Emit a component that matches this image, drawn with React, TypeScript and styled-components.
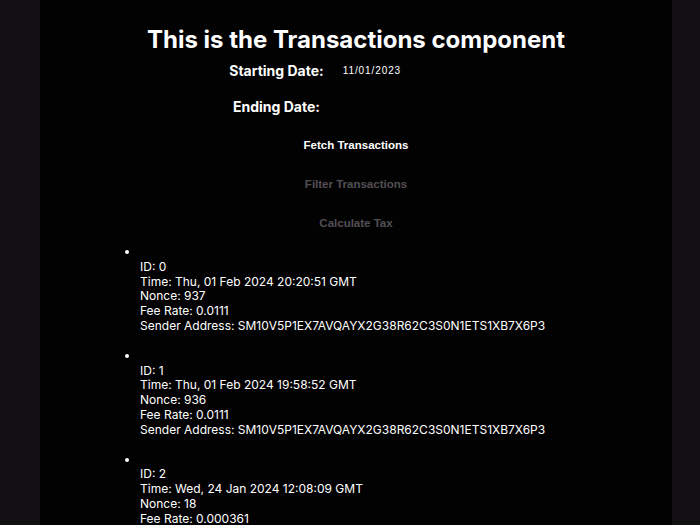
import React from "react";
import styled, { createGlobalStyle } from "styled-components";

const GlobalStyle = createGlobalStyle`
  html, body {
    margin: 0;
    padding: 0;
    background: #121013;
  }
  body {
    font-family: Inter, "Noto Sans", sans-serif;
    color: #ffffff;
  }
`;

const Page = styled.div`
  padding: 0 28px 0 40px;
  min-height: 525px;
`;

const Column = styled.main`
  background: #030203;
  min-height: 525px;
  padding-top: 24px;
  display: flex;
  flex-direction: column;
  align-items: center;
  overflow: hidden;
`;

const Title = styled.h1`
  margin: 0;
  font-family: Inter, sans-serif;
  font-weight: 700;
  font-size: 24px;
  line-height: 32px;
`;

const DateRow = styled.div<{ $top: number }>`
  margin-top: ${(p) => p.$top}px;
  height: 20px;
  display: flex;
  align-items: center;
  gap: 19px;
`;

const DateLabel = styled.label`
  font-family: Inter, sans-serif;
  font-weight: 700;
  font-size: 14px;
`;

const DateField = styled.span`
  width: 140px;
  font-family: "Liberation Sans", Arial, sans-serif;
  font-size: 10px;
  letter-spacing: 0.9px;
  text-align: left;
`;

const ActionButton = styled.button<{ $enabled: boolean }>`
  margin-top: 19px;
  height: 20px;
  padding: 0;
  border: none;
  background: transparent;
  font-family: "Liberation Sans", Arial, sans-serif;
  font-weight: 700;
  font-size: 11.5px;
  color: ${(p) => (p.$enabled ? "#ffffff" : "#525053")};
  cursor: ${(p) => (p.$enabled ? "pointer" : "default")};
`;

const List = styled.ul`
  align-self: stretch;
  margin: 12px 0 0 60px;
  padding-left: 40px;
  text-align: left;
`;

const Item = styled.li`
  font-family: Inter, sans-serif;
  font-size: 12px;
  line-height: 14.8px;
  margin-bottom: 15px;
`;

const Line = styled.div`
  white-space: nowrap;
`;

const transactions = [
  {
    id: 0,
    time: "Thu, 01 Feb 2024 20:20:51 GMT",
    nonce: 937,
    fee: "0.0111",
    sender: "SM10V5P1EX7AVQAYX2G38R62C3S0N1ETS1XB7X6P3",
  },
  {
    id: 1,
    time: "Thu, 01 Feb 2024 19:58:52 GMT",
    nonce: 936,
    fee: "0.0111",
    sender: "SM10V5P1EX7AVQAYX2G38R62C3S0N1ETS1XB7X6P3",
  },
  {
    id: 2,
    time: "Wed, 24 Jan 2024 12:08:09 GMT",
    nonce: 18,
    fee: "0.000361",
    sender: "SM10V5P1EX7AVQAYX2G38R62C3S0N1ETS1XB7X6P3",
  },
];

export default function App() {
  return (
    <>
      <GlobalStyle />
      <Page>
        <Column>
          <Title>This is the Transactions component</Title>
          <DateRow $top={4}>
            <DateLabel>Starting Date:</DateLabel>
            <DateField>11/01/2023</DateField>
          </DateRow>
          <DateRow $top={16}>
            <DateLabel>Ending Date:</DateLabel>
            <DateField />
          </DateRow>
          <ActionButton $enabled>Fetch Transactions</ActionButton>
          <ActionButton $enabled={false}>Filter Transactions</ActionButton>
          <ActionButton $enabled={false}>Calculate Tax</ActionButton>
          <List>
            {transactions.map((t) => (
              <Item key={t.id}>
                <Line>&nbsp;</Line>
                <Line>ID: {t.id}</Line>
                <Line>Time: {t.time}</Line>
                <Line>Nonce: {t.nonce}</Line>
                <Line>Fee Rate: {t.fee}</Line>
                <Line>Sender Address: {t.sender}</Line>
              </Item>
            ))}
          </List>
        </Column>
      </Page>
    </>
  );
}
